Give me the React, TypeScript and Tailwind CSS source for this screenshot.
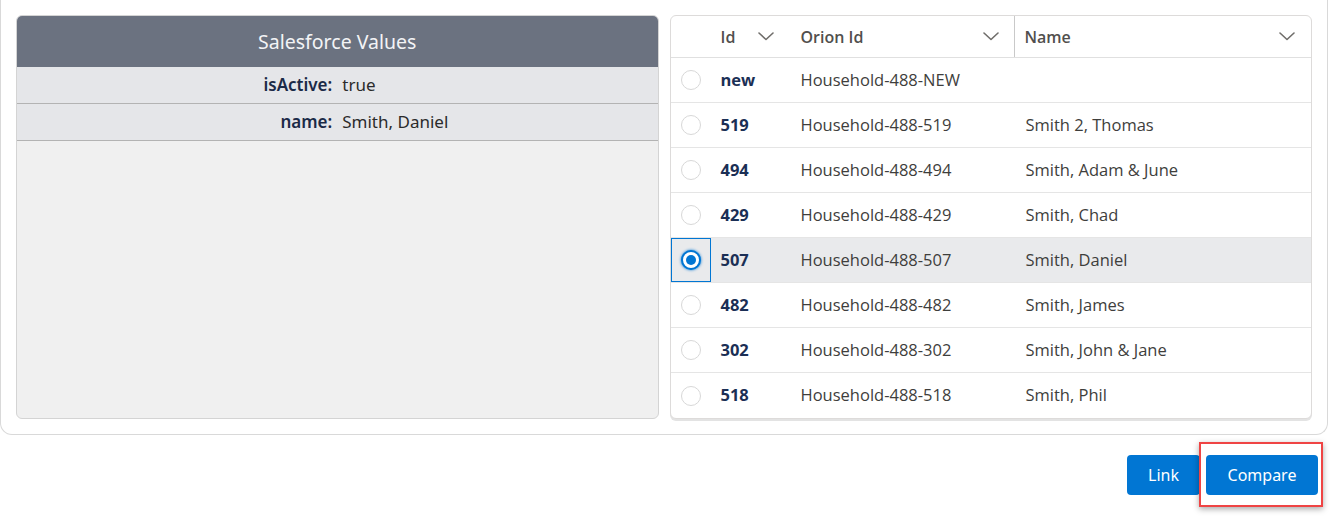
type Row = { id: string; orionId: string; name: string };

const rows: Row[] = [
    { id: "new", orionId: "Household-488-NEW", name: "" },
    { id: "519", orionId: "Household-488-519", name: "Smith 2, Thomas" },
    { id: "494", orionId: "Household-488-494", name: "Smith, Adam & June" },
    { id: "429", orionId: "Household-488-429", name: "Smith, Chad" },
    { id: "507", orionId: "Household-488-507", name: "Smith, Daniel" },
    { id: "482", orionId: "Household-488-482", name: "Smith, James" },
    { id: "302", orionId: "Household-488-302", name: "Smith, John & Jane" },
    { id: "518", orionId: "Household-488-518", name: "Smith, Phil" },
];

const sfValues = [
    { key: "isActive", value: "true" },
    { key: "name", value: "Smith, Daniel" },
];

function Chevron() {
    return (
        <svg width="16" height="9" viewBox="0 0 16 9" fill="none" className="text-[#706e6b]">
            <polyline points="1,1 8,7.5 15,1" stroke="currentColor" strokeWidth="1.6" strokeLinecap="round" strokeLinejoin="round" />
        </svg>
    );
}

function Radio({ checked }: { checked: boolean }) {
    if (checked) {
        return (
            <span className="flex h-[20px] w-[20px] items-center justify-center rounded-full border-2 border-[#0176d3] bg-white shadow-[0_0_3px_#0176d3]">
                <span className="h-[10px] w-[10px] rounded-full bg-[#0176d3]" />
            </span>
        );
    }
    return <span className="h-[20px] w-[20px] rounded-full border border-[#d8d8d8] bg-white" />;
}

export default function App() {
    const selected = "507";

    return (
        <div className="h-[522px] w-[1334px] bg-white font-['Open_Sans',sans-serif]">
            {/* Card */}
            <div className="flex w-[1328px] gap-[11px] rounded-b-[12px] border-x border-b border-[#d9d9d9] px-[15px] pt-[15px] pb-[15px]">
                {/* Salesforce values */}
                <div className="flex h-[404px] w-[643px] flex-col overflow-hidden rounded-[6px] border border-[#d4d4d4] bg-[#f0f0f0] font-['Noto_Sans',sans-serif]">
                    <div className="flex h-[51px] items-center justify-center bg-[#6b7280] text-[19.5px] text-[#f3f4f6]">
                        Salesforce Values
                    </div>
                    {sfValues.map(v => (
                        <div key={v.key} className="grid h-[37px] grid-cols-2 items-center border-b border-[#b3b3b3] bg-[#e5e6e9] text-[17px]">
                            <span className="pr-[5px] text-right font-semibold text-[#1b2a47]">{v.key}:</span>
                            <span className="pl-[5px] text-[#2b2b2b]">{v.value}</span>
                        </div>
                    ))}
                </div>

                {/* Households table */}
                <div className="h-[404px] w-[643px] overflow-hidden rounded-[6px] border border-[#dddbda] bg-white shadow-[0_2px_0_#e3e3e3] text-[16.5px]">
                    <div className="grid h-[42px] grid-cols-[40px_80px_224px_1fr] items-center border-b border-[#e0e0e0] text-[16px] font-semibold text-[#514f4d]">
                        <span />
                        <div className="flex items-center justify-between pl-[10px] pr-[17px]">
                            <span>Id</span>
                            <Chevron />
                        </div>
                        <div className="flex h-full items-center justify-between border-r border-[#c9c9c9] pl-[10px] pr-[15px]">
                            <span>Orion Id</span>
                            <Chevron />
                        </div>
                        <div className="flex items-center justify-between pl-[10px] pr-[16px]">
                            <span>Name</span>
                            <Chevron />
                        </div>
                    </div>
                    {rows.map((r, i) => {
                        const isSel = r.id === selected;
                        return (
                            <div
                                key={r.id}
                                className={`grid h-[45px] grid-cols-[40px_80px_224px_1fr] items-center ${i < rows.length - 1 ? "border-b border-[#e5e5e5]" : ""} ${isSel ? "bg-[#e9eaec]" : ""}`}
                            >
                                <div className={`flex h-full items-center justify-center ${isSel ? "border border-[#0176d3]" : ""}`}>
                                    <Radio checked={isSel} />
                                </div>
                                <span className="pl-[10px] font-bold text-[#1b2f55]">{r.id}</span>
                                <span className="pl-[10px] text-[#3e3e3c]">{r.orionId}</span>
                                <span className="pl-[11px] text-[#3e3e3c]">{r.name}</span>
                            </div>
                        );
                    })}
                </div>
            </div>

            {/* Actions */}
            <div className="flex w-[1318px] justify-end gap-[6px] pt-[20px] font-['Noto_Sans',sans-serif]">
                <button className="h-[40px] w-[73px] rounded-[4px] bg-[#0176d3] text-[16px] text-white">Link</button>
                <div className="relative">
                    <span className="absolute -top-[13px] -bottom-[12px] -left-[7px] -right-[5px] border-2 border-[#ef4444] shadow-[0_2px_6px_rgba(0,0,0,0.35)]" />
                    <button className="relative h-[40px] w-[112px] rounded-[4px] bg-[#0176d3] text-[16px] text-white">Compare</button>
                </div>
            </div>
        </div>
    );
}
